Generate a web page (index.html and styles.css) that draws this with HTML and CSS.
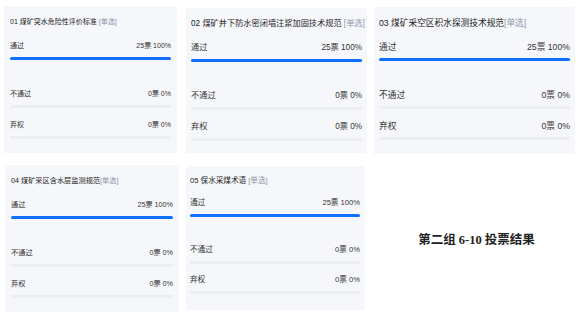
FILE: index.html
```html
<!DOCTYPE html>
<html lang="zh-CN">
<head>
    <meta charset="UTF-8">
    <meta name="viewport" content="width=device-width, initial-scale=1.0">
    <title>第二组 6-10 投票结果</title>
    <link rel="stylesheet" href="styles.css">
</head>
<body>

<div class="row row-top">
    <div class="card card-1">
        <div class="title">01 煤矿突水危险性评价标准 <span class="tag">[单选]</span></div>
        <div class="opt opt-first">
            <div class="line"><span>通过</span><span>25票 100%</span></div>
            <div class="bar"><div class="fill" style="width:100%"></div></div>
        </div>
        <div class="opt">
            <div class="line"><span>不通过</span><span>0票 0%</span></div>
            <div class="bar"><div class="fill" style="width:0%"></div></div>
        </div>
        <div class="opt">
            <div class="line"><span>弃权</span><span>0票 0%</span></div>
            <div class="bar"><div class="fill" style="width:0%"></div></div>
        </div>
    </div>

    <div class="card card-2">
        <div class="title">02 煤矿井下防水密闭墙注浆加固技术规范 <span class="tag">[单选]</span></div>
        <div class="opt opt-first">
            <div class="line"><span>通过</span><span>25票 100%</span></div>
            <div class="bar"><div class="fill" style="width:100%"></div></div>
        </div>
        <div class="opt">
            <div class="line"><span>不通过</span><span>0票 0%</span></div>
            <div class="bar"><div class="fill" style="width:0%"></div></div>
        </div>
        <div class="opt">
            <div class="line"><span>弃权</span><span>0票 0%</span></div>
            <div class="bar"><div class="fill" style="width:0%"></div></div>
        </div>
    </div>

    <div class="card card-3">
        <div class="title">03 煤矿采空区积水探测技术规范<span class="tag">[单选]</span></div>
        <div class="opt opt-first">
            <div class="line"><span>通过</span><span>25票 100%</span></div>
            <div class="bar"><div class="fill" style="width:100%"></div></div>
        </div>
        <div class="opt">
            <div class="line"><span>不通过</span><span>0票 0%</span></div>
            <div class="bar"><div class="fill" style="width:0%"></div></div>
        </div>
        <div class="opt">
            <div class="line"><span>弃权</span><span>0票 0%</span></div>
            <div class="bar"><div class="fill" style="width:0%"></div></div>
        </div>
    </div>
</div>

<div class="row row-bottom">
    <div class="card card-4">
        <div class="title">04 煤矿采区含水层监测规范<span class="tag">[单选]</span></div>
        <div class="opt opt-first">
            <div class="line"><span>通过</span><span>25票 100%</span></div>
            <div class="bar"><div class="fill" style="width:100%"></div></div>
        </div>
        <div class="opt">
            <div class="line"><span>不通过</span><span>0票 0%</span></div>
            <div class="bar"><div class="fill" style="width:0%"></div></div>
        </div>
        <div class="opt">
            <div class="line"><span>弃权</span><span>0票 0%</span></div>
            <div class="bar"><div class="fill" style="width:0%"></div></div>
        </div>
    </div>

    <div class="card card-5">
        <div class="title">05 保水采煤术语 <span class="tag">[单选]</span></div>
        <div class="opt opt-first">
            <div class="line"><span>通过</span><span>25票 100%</span></div>
            <div class="bar"><div class="fill" style="width:100%"></div></div>
        </div>
        <div class="opt">
            <div class="line"><span>不通过</span><span>0票 0%</span></div>
            <div class="bar"><div class="fill" style="width:0%"></div></div>
        </div>
        <div class="opt">
            <div class="line"><span>弃权</span><span>0票 0%</span></div>
            <div class="bar"><div class="fill" style="width:0%"></div></div>
        </div>
    </div>

    <div class="caption">第二组 6-10 投票结果</div>
</div>

</body>
</html>
```

FILE: styles.css
```css
body {
    margin: 0;
    padding: 0;
    background: #fff;
    font-family: "Liberation Sans", "Noto Sans CJK SC", sans-serif;
    color: #333;
}

.row {
    display: flex;
    align-items: flex-start;
}
.row-top { padding-top: 6px; }
.row-bottom { padding-top: 11px; }

/* one vote card */
.card {
    box-sizing: border-box;
    height: 147px;
    padding: 10px 6px 0;
    background: #f6f7fb;
}
.title {
    height: 12px;
    line-height: 12px;
    color: #222;
    white-space: nowrap;
}
.tag { color: #8c96a8; }

.opt { margin-top: 11px; }
.opt-first { margin-top: 12px; padding-bottom: 17px; }
.line {
    display: flex;
    justify-content: space-between;
    height: 12px;
    line-height: 12px;
}
.bar {
    height: 3px;
    margin-top: 5px;
    border-radius: 2px;
    background: #ebedf1;
}
.fill {
    height: 100%;
    border-radius: 2px;
    background: #0f6fff;
}

/* each card came from a different capture, so sizes differ a little */
.card-1 { width: 173px; margin-left: 4px; font-size: 7px; }
.card-2 { width: 181px; margin-left: 9px; margin-top: 2px; height: 145px; padding-left: 5px; padding-right: 5px; font-size: 8.2px; }
.card-3 { width: 201px; margin-left: 7px; margin-top: 1px; padding-left: 5px; padding-right: 5px; font-size: 8.7px; }
.card-4 { width: 174px; margin-left: 5px; font-size: 7.2px; }
.card-5 { width: 179px; margin-left: 7px; margin-top: 1px; height: 144px; padding-top: 9px; padding-left: 4px; padding-right: 5px; font-size: 7.6px; }
.card-5 .opt-first { margin-top: 11px; }
.card-5 .opt { margin-top: 10px; }

.caption {
    flex: 1;
    height: 147px;
    padding-left: 6px;
    display: flex;
    align-items: center;
    justify-content: center;
    font-family: "Liberation Serif", "Noto Sans CJK SC", serif;
    font-weight: bold;
    font-size: 12.5px;
    color: #222;
}
```
